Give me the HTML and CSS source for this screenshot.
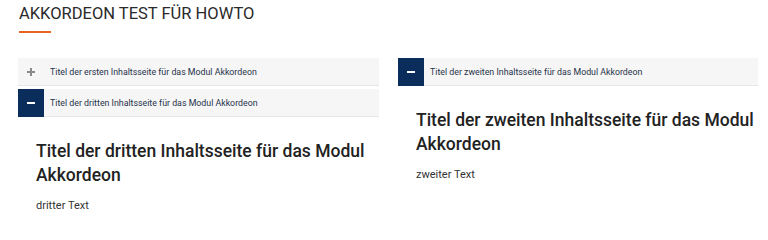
FILE: index.html
```html
<!DOCTYPE html>
<html lang="de">
<head>
<meta charset="utf-8">
<title>Akkordeon Test für HowTo</title>
<link rel="stylesheet" href="styles.css">
</head>
<body>
<div class="page">
  <h1 class="page-title">AKKORDEON TEST FÜR HOWTO</h1>
  <div class="title-rule"></div>
  <div class="columns">
    <div class="accordion">
      <div class="acc-item">
        <div class="acc-head">
          <span class="acc-icon closed"><span class="bar h"></span><span class="bar v"></span></span>
          <span class="acc-label">Titel der ersten Inhaltsseite für das Modul Akkordeon</span>
        </div>
      </div>
      <div class="acc-item open">
        <div class="acc-head">
          <span class="acc-icon opened"><span class="bar h"></span></span>
          <span class="acc-label">Titel der dritten Inhaltsseite für das Modul Akkordeon</span>
        </div>
        <div class="acc-body">
          <h2 class="acc-title">Titel der dritten Inhaltsseite für das Modul Akkordeon</h2>
          <p class="acc-text">dritter Text</p>
        </div>
      </div>
    </div>
    <div class="accordion">
      <div class="acc-item open">
        <div class="acc-head">
          <span class="acc-icon opened"><span class="bar h"></span></span>
          <span class="acc-label">Titel der zweiten Inhaltsseite für das Modul Akkordeon</span>
        </div>
        <div class="acc-body">
          <h2 class="acc-title">Titel der zweiten Inhaltsseite für das Modul Akkordeon</h2>
          <p class="acc-text">zweiter Text</p>
        </div>
      </div>
    </div>
  </div>
</div>
</body>
</html>
```
FILE: styles.css
```css
* { box-sizing: border-box; }
html, body { margin: 0; padding: 0; background: #fff; }
body { font-family: Roboto, "Liberation Sans", sans-serif; color: #333; }

.page { padding: 4px 10px 0 18px; }

.page-title {
  margin: 0 0 0 1px;
  font-size: 16.5px;
  line-height: 20px;
  font-weight: 400;
  color: #2a2a2a;
}

.title-rule {
  width: 32px;
  height: 2px;
  background: #e8641e;
  margin: 7px 0 25px 1px;
}

.columns {
  display: grid;
  grid-template-columns: 361px 360px;
  column-gap: 19px;
}

.acc-item { margin-bottom: 3px; }

.acc-head {
  display: flex;
  align-items: center;
  height: 28px;
  background: #f6f6f6;
  border-bottom: 1px solid #e6e6e6;
}

.acc-icon {
  position: relative;
  flex: 0 0 26px;
  width: 26px;
  height: 100%;
  display: flex;
  align-items: center;
  justify-content: center;
}
.acc-icon.opened { background: #0b2d5b; height: 28px; margin-bottom: -1px; align-self: flex-start; }

.bar { display: block; background: #8a8a8a; }
.bar.h { width: 8px; height: 2px; }
.bar.v { position: absolute; width: 2px; height: 8px; left: 12px; top: 50%; margin-top: -4px; }
.opened .bar.h { background: #fff; height: 2.5px; }

.acc-label {
  padding-left: 6px;
  font-size: 8.8px;
  color: #26324a;
  white-space: nowrap;
}

.acc-body { padding: 22px 0 10px 18px; }

.acc-title {
  margin: 0;
  font-size: 17.5px;
  line-height: 24px;
  font-weight: 500;
  color: #222;
}

.acc-text {
  margin: 10px 0 0;
  font-size: 11px;
  line-height: 18px;
  color: #333;
}
```
